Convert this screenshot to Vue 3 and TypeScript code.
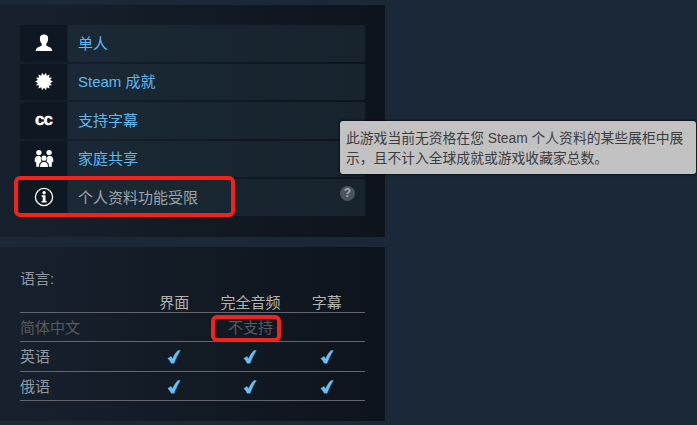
<script setup lang="ts">

interface Feature {
    icon: 'single' | 'achievements' | 'captions' | 'family' | 'info';
    label: string;
    limited?: boolean;
}

interface Language {
    name: string;
    supported: boolean;
}

const features: Feature[] = [
    { icon: 'single', label: '单人' },
    { icon: 'achievements', label: 'Steam 成就' },
    { icon: 'captions', label: '支持字幕' },
    { icon: 'family', label: '家庭共享' },
    { icon: 'info', label: '个人资料功能受限', limited: true },
];

const columns = ['界面', '完全音频', '字幕'];

const languages: Language[] = [
    { name: '简体中文', supported: false },
    { name: '英语', supported: true },
    { name: '俄语', supported: true },
];

/** 14 pointed badge, centered on a 20x20 box */
const burst = Array.from({ length: 28 }, (_, i) => {
    const r = i % 2 ? 6.3 : 8.9;
    const a = ((i + 1) * Math.PI) / 14 - Math.PI / 2;
    return `${(10 + r * Math.cos(a)).toFixed(2)},${(9.5 + r * Math.sin(a)).toFixed(2)}`;
}).join(' ');

</script>

<template>
    <main class="page">
        <section class="panel features">
            <div v-for="item in features" :key="item.icon" class="feature" :class="{ limited: item.limited }">
                <div class="icon">
                    <svg v-if="item.icon === 'single'" viewBox="0 0 20 20">
                        <path d="M10 1.6c2.700 0 4.100 1.300 4.100 3.600 0 2.500-.6 4.300-1.800 5.400v2c.8 1.400 5.800 1.100 6 5.400H1.700c.2-4.300 5.200-4 6-5.400v-2C6.500 9.500 5.900 7.700 5.900 5.200c0-2.300 1.400-3.600 4.100-3.600z" />
                    </svg>
                    <svg v-else-if="item.icon === 'achievements'" viewBox="0 0 20 20">
                        <polygon :points="burst" />
                    </svg>
                    <span v-else-if="item.icon === 'captions'" class="cc">cc</span>
                    <svg v-else-if="item.icon === 'family'" viewBox="0 0 20 20">
                        <circle cx="4.900" cy="3.600" r="2.700" />
                        <circle cx="15.100" cy="3.600" r="2.700" />
                        <circle cx="10" cy="9.200" r="2.600" />
                        <path d="M3.300 7.100h2.600l1.100 1.700c-.5 1.700 0 2.900.8 3.600-1.900.7-2.700 2-2.700 4.300v1H2.200v-4.200L.7 12.400C.6 9.400 1.300 7.400 3.300 7.100z" />
                        <path d="M16.700 7.100h-2.600l-1.100 1.700c.5 1.700 0 2.900-.8 3.600 1.900.7 2.700 2 2.700 4.300v1h2.900v-4.200l1.500-1.100c.1-3-.6-5-2.600-5.300z" />
                        <path d="M6 18.100c0-3.700 1.400-5.200 4-5.200s4 1.500 4 5.200z" />
                    </svg>
                    <svg v-else viewBox="0 0 20 20">
                        <circle cx="10" cy="10" r="8.600" fill="none" stroke="currentColor" stroke-width="1.300" />
                        <circle cx="10.100" cy="5.800" r="1.700" />
                        <path d="M7.600 8.300h3.900v5.700h1.100v1.400H7.600V14h1.100V9.700H7.600z" />
                    </svg>
                </div>
                <div class="label">
                    <span class="name">{{ item.label }}</span>
                    <span v-if="item.limited" class="help">?</span>
                </div>
            </div>
            <div class="mark mark-profile"></div>
        </section>

        <section class="panel languages">
            <div class="title">语言:</div>
            <table>
                <thead>
                    <tr>
                        <th></th>
                        <th v-for="column in columns" :key="column">{{ column }}</th>
                    </tr>
                </thead>
                <tbody>
                    <tr v-for="language in languages" :key="language.name" :class="{ unsupported: !language.supported }">
                        <td>{{ language.name }}</td>
                        <template v-if="language.supported">
                            <td v-for="column in columns" :key="column" class="check">
                                <svg viewBox="0 0 14 14">
                                    <path d="M.8 8.400l3.200-2 1.600 2.300C7 5.500 8.900 2.600 10.900.6h2.400C10.800 4.400 8.800 8.600 7.100 13.200H4.200C3.300 11.200 2.200 9.600.8 8.400z" />
                                </svg>
                            </td>
                        </template>
                        <td v-else colspan="3">不支持</td>
                    </tr>
                </tbody>
            </table>
            <div class="mark mark-language"></div>
        </section>

        <div class="tooltip">此游戏当前无资格在您 Steam 个人资料的某些展柜中展<br>示，且不计入全球成就或游戏收藏家总数。</div>
    </main>
</template>

<style>
  body {
    margin: 0;
    background: #1b2838;
  }
</style>

<style scoped>
  .page {
    position: relative;
    display: flex;
    flex-direction: column;
    align-items: flex-start;
    gap: 10px;
    box-sizing: border-box;
    height: 425px;
    padding-top: 5px;
    overflow: hidden;
    background: #1b2838;
    color: #8f98a0;
    font: 15px/20px "Liberation Sans", "Noto Sans CJK SC", sans-serif;
  }

  .panel {
    position: relative;
    box-sizing: border-box;
    width: 385px;
    padding: 20px;
    background: linear-gradient(to right, #17212e 0%, #121a24 50%, #0e141c 100%);
  }

  .features {
    display: flex;
    flex-direction: column;
    gap: 2px;
    height: 232px;
  }

  .feature {
    display: flex;
    gap: 1px;
    height: 36.5px;
    flex: none;
    color: #5db8f2;
  }

  .feature.limited {
    color: #9ea4a8;
  }

  .icon {
    display: flex;
    align-items: center;
    justify-content: center;
    width: 47px;
    background: #0f1722;
    color: #fff;
  }

  .icon svg {
    width: 20px;
    height: 20px;
    fill: currentColor;
  }

  .cc {
    font-size: 17px;
    font-weight: bold;
    letter-spacing: -1px;
    -webkit-text-stroke: 0.4px currentColor;
  }

  .label {
    display: flex;
    flex: 1;
    align-items: center;
    justify-content: space-between;
    padding: 0 10px;
    background: linear-gradient(to right, #1a2935, #17232d);
  }

  .name {
    padding-top: 1px;
  }

  .help {
    width: 15px;
    height: 15px;
    margin-bottom: 7px;
    border-radius: 50%;
    background: #4a545c;
    color: #a5acb1;
    font-size: 12px;
    font-weight: bold;
    line-height: 15px;
    text-align: center;
  }

  .languages {
    height: 174px;
    padding-top: 22px;
  }

  table {
    width: 345px;
    table-layout: fixed;
    border-collapse: separate;
    border-spacing: 0;
  }

  th, td {
    box-sizing: border-box;
    height: 29.33px;
    padding: 2px 0 0;
    border-bottom: 1px solid #61666c;
    text-align: center;
  }

  th {
    height: 24px;
    padding-top: 4px;
    color: #b5b3ae;
    font-weight: normal;
    line-height: 19px;
    vertical-align: bottom;
  }

  th:first-child {
    width: 116px;
  }

  td:first-child {
    text-align: left;
  }

  .unsupported {
    color: #56595d;
  }

  .check svg {
    display: block;
    width: 14px;
    height: 14px;
    margin: 0 auto;
    fill: #67c1f5;
    stroke: #67c1f5;
    stroke-width: 0.4;
  }

  /* hand drawn highlights over the panels */
  .mark {
    position: absolute;
    box-sizing: border-box;
    border: 4px solid #f5221b;
    border-radius: 6px;
  }

  .mark-profile {
    left: 14px;
    top: 171px;
    width: 221px;
    height: 41px;
  }

  .mark-language {
    left: 211px;
    top: 68px;
    width: 70px;
    height: 27px;
  }

  .tooltip {
    position: absolute;
    left: 340px;
    top: 121px;
    box-sizing: border-box;
    width: 356px;
    height: 53px;
    padding: 8px 6px;
    border-radius: 3px;
    background: #c2c2c2;
    box-shadow: 0 0 3px #000;
    color: #3d3d3f;
    font-size: 13.8px;
    line-height: 20px;
    white-space: nowrap;
  }
</style>
